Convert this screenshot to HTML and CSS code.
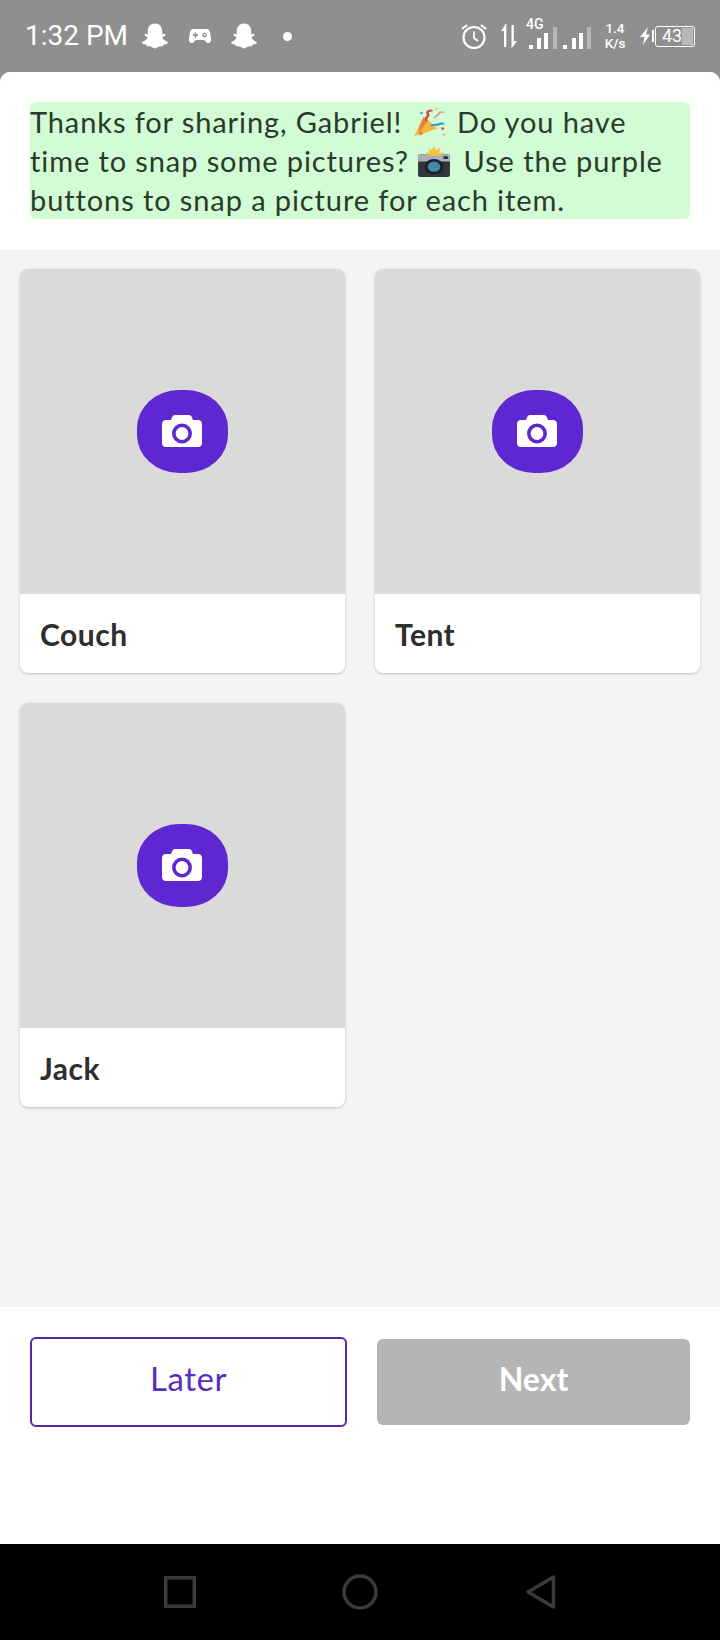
FILE: index.html
```html
<!DOCTYPE html>
<html lang="en">
<head>
<meta charset="utf-8">
<title>Snap pictures</title>
<link rel="stylesheet" href="styles.css">
</head>
<body>
<div class="phone">
  <header class="status">
    <div class="status-left">
      <span class="time">1:32 PM</span>
      <svg class="ghost" viewBox="0 0 28 28"><path d="M14 1.500c4.600 0 7.200 3.300 7.200 7.400v3.300l2.600-.5.9 1.400c-.9 1.300-2.400 1.700-3.300 2.100.6 2 2.400 3.700 5.100 4.500l.4 1.500c-1.100.9-2.900 1.100-4.300 1.400l-.7 1.900c-1.900-.2-3.500-.3-4.900.6-1.100.7-2 1.400-3 1.400s-1.900-.7-3-1.400c-1.400-.9-3-.8-4.900-.6l-.7-1.900c-1.400-.3-3.200-.5-4.300-1.400l.4-1.500c2.700-.8 4.500-2.500 5.100-4.500-.9-.4-2.400-.8-3.300-2.100l.9-1.400 2.600.5V8.900c0-4.100 2.600-7.400 7.200-7.400z"/></svg>
      <svg class="pad" viewBox="0 0 22 16"><path fill-rule="evenodd" d="M5 1h12c2.500 0 4 1.500 4.300 4l.7 6.500c.2 2-1 3.500-2.700 3.500-1.300 0-2.100-.8-2.800-1.800-.5-.8-1-1.200-2-1.200H7.500c-1 0-1.500.4-2 1.200C4.800 14.200 4 15 2.700 15 1 15-.2 13.500 0 11.500L.7 5C1 2.500 2.500 1 5 1zm.6 3.500v1.800H3.800v1.600h1.800v1.800h1.600V7.900H9V6.300H7.200V4.500H5.600zM15.500 4.800a2.300 2.300 0 1 0 0 4.600 2.300 2.300 0 0 0 0-4.600zm0 1.300a1 1 0 1 1 0 2 1 1 0 0 1 0-2z"/></svg>
      <svg class="ghost second" viewBox="0 0 28 28"><path d="M14 1.500c4.600 0 7.200 3.300 7.200 7.400v3.300l2.600-.5.9 1.400c-.9 1.300-2.400 1.700-3.300 2.100.6 2 2.400 3.700 5.100 4.500l.4 1.500c-1.100.9-2.900 1.100-4.300 1.400l-.7 1.900c-1.900-.2-3.500-.3-4.900.6-1.100.7-2 1.400-3 1.400s-1.900-.7-3-1.400c-1.400-.9-3-.8-4.900-.6l-.7-1.900c-1.400-.3-3.200-.5-4.300-1.400l.4-1.500c2.700-.8 4.500-2.500 5.100-4.500-.9-.4-2.400-.8-3.300-2.100l.9-1.400 2.600.5V8.900c0-4.100 2.600-7.400 7.200-7.400z"/></svg>
      <span class="dot"></span>
    </div>
    <div class="status-right">
      <svg class="alarm" viewBox="0 0 28 28" fill="none" stroke="#fff"><circle cx="14" cy="15.500" r="10.500" stroke-width="2.200"/><path d="M14 9.500v6.500l4 3" stroke-width="1.800"/><path d="M2 7l5-4M26 7l-5-4" stroke-width="2.200"/></svg>
      <svg class="arrows" viewBox="0 0 18 26"><path d="M5 1v1L1 8h3v16h2.300V1zM11.500 2h2.300v16H17l-5.500 7.500z"/></svg>
      <div class="signal">
        <span class="net">4G</span>
        <svg class="bars" viewBox="0 0 66 22"><path d="M4 18h4v4H4zM12 11h4v11h-4zM19 6h4v16h-4zM38 18h4v4h-4zM47 11h4v11h-4zM54 6h4v16h-4z"/><path class="dim" d="M28 0h4v22h-4zM62 0h4v22h-4z"/></svg>
      </div>
      <div class="speed"><span>1.4</span><span>K/s</span></div>
      <svg class="bolt" viewBox="0 0 16 18"><path d="M9 0 1 10h4.500L4 18l7-10.500H7zM13 3h2v12h-2z"/></svg>
      <div class="battery"><span class="level"></span><span class="pct">43</span></div>
    </div>
  </header>

  <main class="screen">
    <section class="intro">
      <p class="note">
        <span class="line">Thanks for sharing, Gabriel!
          <svg class="emoji" viewBox="0 0 32 36" preserveAspectRatio="none"><path fill="#f6b73c" d="M1 34 10 11l13 14z"/><path fill="#e8813a" d="M5 24l5 7-4 2zM10 12l4 4-7 12-1-5z"/><path fill="none" stroke="#d94a4a" stroke-width="2.500" d="M13 16c-3-4 3-5 1-8s3-5 4-3"/><path fill="none" stroke="#e39ab8" stroke-width="2" d="M20 13c1-3 3-2 4-5s3-2 5-2"/><path fill="none" stroke="#2f9ed6" stroke-width="2.500" d="M17 22c3-3 5 0 8-2s3 0 4-1"/><circle cx="8" cy="7" r="1.500" fill="#4bb0d8"/><circle cx="28" cy="25" r="1.500" fill="#d94a4a"/><circle cx="29" cy="32" r="1.200" fill="#e39ab8"/><circle cx="22" cy="2" r="1.300" fill="#e9c84a"/></svg>
          Do you have</span>
        <span class="line">time to snap some pictures?
          <svg class="emoji flash" viewBox="0 0 32 36" preserveAspectRatio="none"><rect x="1" y="10" width="30" height="26" rx="2" fill="#31373d"/><rect x="1" y="10" width="30" height="8" fill="#a9b1b8"/><circle cx="16" cy="24" r="9" fill="#1a2228"/><circle cx="16" cy="24" r="6" fill="#4289a8"/><rect x="25" y="12" width="4" height="3" fill="#1a2228"/><path fill="#f5c33b" d="M16 0l2 5 4-3-1 6 5-1-4 4H11L8 7l4 1-1-5 3 2z"/></svg>
          Use the purple</span>
        <span class="line">buttons to snap a picture for each item.</span>
      </p>
    </section>

    <section class="grid">
      <article class="card">
        <div class="photo">
          <div class="snap"><svg class="cam" viewBox="0 0 40 32"><path fill-rule="evenodd" d="M13 0h14c1.500 0 2.500 1 3 2.500L31 5h5c2.400 0 4 1.600 4 4v19c0 2.400-1.600 4-4 4H4c-2.400 0-4-1.600-4-4V9c0-2.400 1.600-4 4-4h5l1-2.500C10.500 1 11.500 0 13 0zm7 8.500a10 10 0 1 0 0 20 10 10 0 0 0 0-20zm0 3.600a6.400 6.400 0 1 1 0 12.800 6.400 6.400 0 0 1 0-12.800z"/></svg></div>
        </div>
        <h2 class="label">Couch</h2>
      </article>
      <article class="card">
        <div class="photo">
          <div class="snap"><svg class="cam" viewBox="0 0 40 32"><path fill-rule="evenodd" d="M13 0h14c1.500 0 2.500 1 3 2.500L31 5h5c2.400 0 4 1.600 4 4v19c0 2.400-1.600 4-4 4H4c-2.400 0-4-1.600-4-4V9c0-2.400 1.600-4 4-4h5l1-2.500C10.500 1 11.500 0 13 0zm7 8.500a10 10 0 1 0 0 20 10 10 0 0 0 0-20zm0 3.600a6.400 6.400 0 1 1 0 12.800 6.400 6.400 0 0 1 0-12.800z"/></svg></div>
        </div>
        <h2 class="label">Tent</h2>
      </article>
      <article class="card">
        <div class="photo">
          <div class="snap"><svg class="cam" viewBox="0 0 40 32"><path fill-rule="evenodd" d="M13 0h14c1.500 0 2.500 1 3 2.500L31 5h5c2.400 0 4 1.600 4 4v19c0 2.400-1.600 4-4 4H4c-2.400 0-4-1.600-4-4V9c0-2.400 1.600-4 4-4h5l1-2.500C10.500 1 11.500 0 13 0zm7 8.500a10 10 0 1 0 0 20 10 10 0 0 0 0-20zm0 3.600a6.400 6.400 0 1 1 0 12.800 6.400 6.400 0 0 1 0-12.800z"/></svg></div>
        </div>
        <h2 class="label">Jack</h2>
      </article>
    </section>

    <footer class="actions">
      <button class="btn later" type="button">Later</button>
      <button class="btn next" type="button">Next</button>
    </footer>
  </main>

  <nav class="softkeys">
    <svg class="key" viewBox="0 0 36 36" fill="none" stroke="#3a3a3a" stroke-width="3.500"><rect x="3.750" y="3.750" width="28.500" height="28.500"/></svg>
    <svg class="key" viewBox="0 0 36 36" fill="none" stroke="#3a3a3a" stroke-width="3.500"><circle cx="18" cy="18" r="16"/></svg>
    <svg class="key" viewBox="0 0 36 36" fill="none" stroke="#3a3a3a" stroke-width="3.500" stroke-linejoin="round"><path d="M31.500 3v30L6 18z"/></svg>
  </nav>
</div>
</body>
</html>
```
FILE: styles.css
```css
* { box-sizing: border-box; }
html, body { margin: 0; padding: 0; }
body { width: 720px; height: 1640px; overflow: hidden; background: #000; font-family: "Lato", "Liberation Sans", sans-serif; }
.phone { width: 720px; height: 1640px; display: flex; flex-direction: column; background: #8f8f8f; }

.status { height: 72px; flex: none; display: flex; justify-content: space-between; align-items: center; padding: 0 25px; color: #fff; fill: #fff; font-family: "Roboto", sans-serif; }
.status-left { display: flex; align-items: center; }
.time { font-size: 28px; line-height: 32px; width: 116px; white-space: nowrap; }
.ghost { width: 28px; height: 28px; display: block; }
.pad { width: 22px; height: 16px; margin-left: 20px; display: block; }
.ghost.second { margin-left: 19px; }
.dot { width: 9px; height: 9px; border-radius: 50%; background: #fff; margin-left: 25px; }
.status-right { display: flex; align-items: center; }
.alarm { width: 28px; height: 28px; display: block; }
.arrows { width: 18px; height: 26px; margin-left: 12px; display: block; }
.signal { position: relative; display: flex; margin-left: 7px; width: 66px; height: 26px; align-items: flex-end; }
.net { position: absolute; left: 1px; top: -6px; font-size: 14px; line-height: 14px; font-weight: 500; }
.bars { width: 66px; height: 22px; display: block; }
.dim { opacity: .35; }
.speed { display: flex; flex-direction: column; align-items: center; margin-left: 14px; font-size: 13.500px; line-height: 15px; font-weight: 500; width: 20px; }
.bolt { width: 16px; height: 18px; margin-left: 14px; display: block; }
.battery { position: relative; width: 40px; height: 21px; border: 1.500px solid #fff; border-radius: 3px; display: flex; align-items: center; justify-content: center; font-size: 18px; line-height: 18px; }
.level { position: absolute; right: 1px; top: 1px; bottom: 1px; width: 11px; background: #b8b8b8; }
.pct { position: relative; margin-right: 6px; }

.screen { flex: 1; display: flex; flex-direction: column; background: #f3f4f6; border-radius: 10px 10px 0 0; overflow: hidden; }
.intro { height: 178px; flex: none; background: #fff; padding: 30px 30px 0; }
.note { margin: 0; height: 117px; background: #d2fcd3; border-radius: 6px; font-size: 29px; line-height: 39px; letter-spacing: .9px; color: #2b3a2f; }
.line { display: block; white-space: nowrap; height: 39px; }
.emoji { width: 34px; height: 31px; vertical-align: -5px; margin: 0 2px; }
.emoji.flash { margin: 0 4px 0 0; }

.grid { flex: 1; display: grid; grid-template-columns: 325px 325px; grid-auto-rows: 404px; gap: 30px; padding: 19px 20px 0; align-content: start; }
.card { background: #fff; border-radius: 8px; overflow: hidden; box-shadow: 0 1px 3px rgba(0,0,0,.22); display: flex; flex-direction: column; }
.photo { height: 325px; flex: none; background: #dadada; display: flex; align-items: center; justify-content: center; }
.snap { width: 91px; height: 83px; border-radius: 46%; background: #5e27d1; display: flex; align-items: center; justify-content: center; padding: 0 1px 2px 0; }
.cam { width: 40px; height: 32px; fill: #fff; display: block; }
.label { margin: 0; flex: 1; display: flex; align-items: center; padding: 0 20px; font-size: 30px; font-weight: 700; letter-spacing: .5px; color: #2e2e2e; }

.actions { height: 237px; flex: none; background: #fff; display: flex; justify-content: space-between; align-items: flex-start; padding: 30px 30px 0; }
.btn { font-family: inherit; font-size: 32px; border-radius: 6px; display: block; padding: 0 0 8px; }
.later { width: 317px; height: 90px; background: #fff; border: 2px solid #5527a8; color: #5a2dc2; font-weight: 400; font-size: 33px; letter-spacing: .5px; }
.next { width: 313px; height: 86px; margin-top: 2px; background: #b5b5b5; border: 0; color: #fff; font-weight: 700; }

.softkeys { height: 96px; flex: none; background: #000; display: flex; justify-content: center; gap: 144px; align-items: center; }
.key { width: 36px; height: 36px; display: block; }
```
